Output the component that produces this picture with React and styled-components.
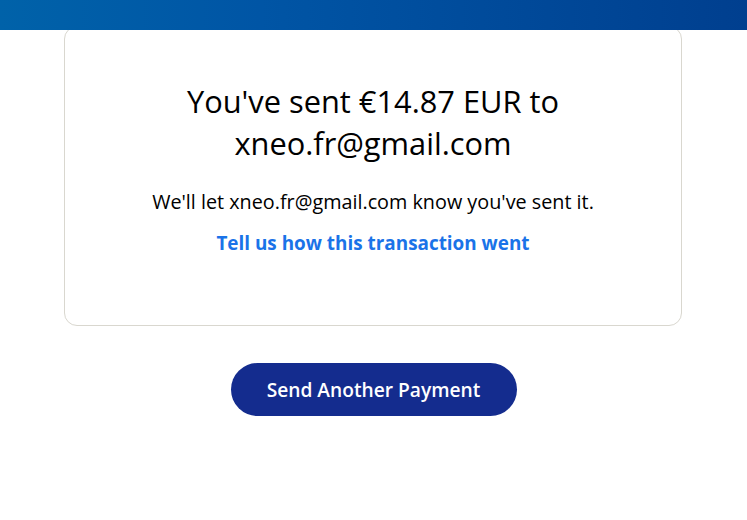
import React from 'react';
import styled, { createGlobalStyle } from 'styled-components';

const Global = createGlobalStyle`
  body {
    margin: 0;
    background: #ffffff;
    font-family: "Open Sans", Lato, sans-serif;
    color: #001435;
  }
`;

const Header = styled.header`
  position: fixed;
  top: 0;
  left: 0;
  right: 0;
  height: 30px;
  background: linear-gradient(90deg, #0062a9 0%, #0055a5 35%, #003f8f 100%);
  z-index: 2;
`;

const Page = styled.main`
  display: flex;
  flex-direction: column;
  align-items: center;
  padding-top: 26px;
`;

const Card = styled.section`
  box-sizing: border-box;
  width: 618px;
  height: 300px;
  margin-right: 1px;
  border: 1px solid #d9d7cf;
  border-radius: 13px;
  background: #fff;
  display: flex;
  flex-direction: column;
  align-items: center;
  padding-top: 53px;
  text-align: center;
`;

const Title = styled.h1`
  margin: 0;
  font-weight: 400;
  font-size: 30.8px;
  line-height: 42px;
  color: #000;
  width: 460px;
`;

const Message = styled.p`
  margin: 25px 0 0;
  font-size: 19.8px;
  line-height: 26px;
  color: #000;
`;

const FeedbackLink = styled.a`
  margin-top: 15px;
  font-size: 18.9px;
  font-weight: 700;
  line-height: 26px;
  color: #1a73e8;
  text-decoration: none;
  cursor: pointer;
`;

const Button = styled.button`
  margin-top: 37px;
  width: 286px;
  height: 53px;
  border: none;
  border-radius: 27px;
  background: #142c8e;
  color: #fff;
  font-family: inherit;
  font-size: 19.2px;
  font-weight: 600;
  cursor: pointer;
`;

export default function App() {
  return (
    <>
      <Global />
      <Header />
      <Page>
        <Card>
          <Title>You've sent €14.87 EUR to xneo.fr@gmail.com</Title>
          <Message>We'll let xneo.fr@gmail.com know you've sent it.</Message>
          <FeedbackLink>Tell us how this transaction went</FeedbackLink>
        </Card>
        <Button>Send Another Payment</Button>
      </Page>
    </>
  );
}
